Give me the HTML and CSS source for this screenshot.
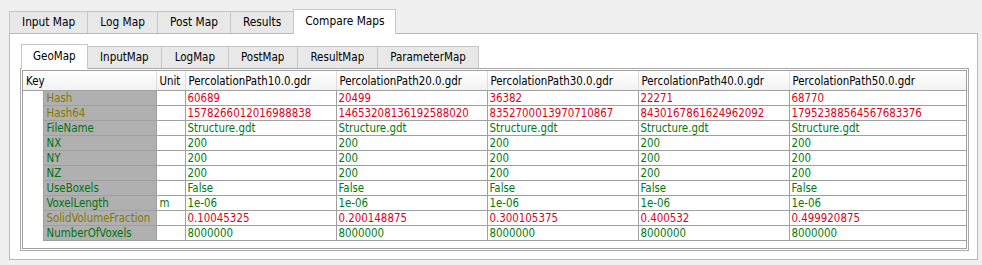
FILE: index.html
```html
<!DOCTYPE html>
<html>
<head>
<meta charset="utf-8">
<link rel="stylesheet" href="styles.css">
</head>
<body>
<div class="window">
  <div class="tabbar">
    <div class="tab">Input Map</div>
    <div class="tab">Log Map</div>
    <div class="tab">Post Map</div>
    <div class="tab">Results</div>
    <div class="tab active">Compare Maps</div>
  </div>
  <div class="pane">
    <div class="tabbar inner">
      <div class="tab active">GeoMap</div>
      <div class="tab">InputMap</div>
      <div class="tab">LogMap</div>
      <div class="tab">PostMap</div>
      <div class="tab">ResultMap</div>
      <div class="tab">ParameterMap</div>
    </div>
    <div class="pane innerpane">
      <div class="widget">
        <table class="grid">
          <colgroup>
            <col class="c-indent"><col class="c-key"><col class="c-unit">
            <col class="c-path"><col class="c-path"><col class="c-path"><col class="c-path"><col class="c-last">
          </colgroup>
          <thead>
            <tr>
              <th colspan="2">Key</th><th>Unit</th>
              <th>PercolationPath10.0.gdr</th><th>PercolationPath20.0.gdr</th><th>PercolationPath30.0.gdr</th><th>PercolationPath40.0.gdr</th><th class="lasth">PercolationPath50.0.gdr</th>
            </tr>
          </thead>
          <tbody>
            <tr class="diff"><td class="indent"></td><td class="key">Hash</td><td></td><td>60689</td><td>20499</td><td>36382</td><td>22271</td><td>68770</td></tr>
            <tr class="diff"><td class="indent"></td><td class="key">Hash64</td><td></td><td>1578266012016988838</td><td>14653208136192588020</td><td>8352700013970710867</td><td>8430167861624962092</td><td>17952388564567683376</td></tr>
            <tr class="same"><td class="indent"></td><td class="key">FileName</td><td></td><td>Structure.gdt</td><td>Structure.gdt</td><td>Structure.gdt</td><td>Structure.gdt</td><td>Structure.gdt</td></tr>
            <tr class="same"><td class="indent"></td><td class="key">NX</td><td></td><td>200</td><td>200</td><td>200</td><td>200</td><td>200</td></tr>
            <tr class="same"><td class="indent"></td><td class="key">NY</td><td></td><td>200</td><td>200</td><td>200</td><td>200</td><td>200</td></tr>
            <tr class="same"><td class="indent"></td><td class="key">NZ</td><td></td><td>200</td><td>200</td><td>200</td><td>200</td><td>200</td></tr>
            <tr class="same"><td class="indent"></td><td class="key">UseBoxels</td><td></td><td>False</td><td>False</td><td>False</td><td>False</td><td>False</td></tr>
            <tr class="same"><td class="indent"></td><td class="key">VoxelLength</td><td class="unit">m</td><td>1e-06</td><td>1e-06</td><td>1e-06</td><td>1e-06</td><td>1e-06</td></tr>
            <tr class="diff"><td class="indent"></td><td class="key">SolidVolumeFraction</td><td></td><td>0.10045325</td><td>0.200148875</td><td>0.300105375</td><td>0.400532</td><td>0.499920875</td></tr>
            <tr class="same"><td class="indent"></td><td class="key">NumberOfVoxels</td><td></td><td>8000000</td><td>8000000</td><td>8000000</td><td>8000000</td><td>8000000</td></tr>
          </tbody>
        </table>
      </div>
    </div>
  </div>
</div>
</body>
</html>
```
FILE: styles.css
```css
html, body {
  margin: 0;
  padding: 0;
  background: #f0f0f0;
}
body {
  font-family: "DejaVu Sans Condensed", "Liberation Sans", sans-serif;
  font-size: 11.4px;
  color: #000;
}
.window {
  width: 982px;
  height: 265px;
  box-sizing: border-box;
  padding: 9px 4px 0 9px;
}
.tabbar {
  display: flex;
  align-items: flex-end;
  height: 25px;
  margin-bottom: -1px;
}
.tab {
  box-sizing: border-box;
  height: 22px;
  margin-bottom: 1px;
  padding: 0 12px;
  line-height: 21px;
  border: 1px solid #c6c6c6;
  border-bottom: none;
  background: #e8e8e8;
  margin-left: -1px;
  white-space: nowrap;
  font-size: 11.8px;
}
.tab:first-child {
  margin-left: 0;
}
.tab.active {
  height: 25px;
  margin-bottom: 0;
  background: #ffffff;
  line-height: 22px;
  position: relative;
  padding: 0 10px 0 11px;
}
.inner .tab {
  font-size: 11.5px;
  padding: 0 12.5px;
}
.inner .tab.active {
  padding: 0 11px;
}
.pane {
  border: 1px solid #b9b9b9;
  background: #ffffff;
  padding: 10px 8px 8px 10px;
}
.tabbar.inner {
  margin-left: 1px;
}
.innerpane {
  border: 1px solid #a9a9a9;
  padding: 1px;
}
.widget {
  border: 1px solid #a0a0a0;
  background: #fff;
  height: 177px;
  overflow: hidden;
}
.grid {
  table-layout: fixed;
  border-collapse: collapse;
  width: 943px;
}
.c-indent { width: 20px; }
.c-key { width: 113px; }
.c-unit { width: 29px; }
.c-path { width: 151px; }
.c-last { width: 177px; }
.grid th {
  height: 19px;
  padding: 0 3px;
  text-align: left;
  font-weight: normal;
  background: linear-gradient(#ffffff, #f2f2f2);
  border-right: 1px solid #dedede;
  border-bottom: 1px solid #a0a0a0;
  white-space: nowrap;
  overflow: hidden;
}
.grid th.lasth {
  border-right: 1px solid #a0a0a0;
}
.grid td {
  height: 14px;
  line-height: 14px;
  padding: 0 2px 0 2px;
  border: 1px solid #a0a0a0;
  white-space: nowrap;
  overflow: hidden;
}
.grid td.indent {
  border: none;
  background: #fff;
}
.grid td.key {
  background: #b0b0b0;
  padding-left: 3px;
}
.grid td.unit {
  padding-left: 3px;
}
.diff td { color: #e0001a; }
.diff td.key { color: #857800; }
.same td { color: #007a10; }
.same td.key { color: #00720f; }
```
